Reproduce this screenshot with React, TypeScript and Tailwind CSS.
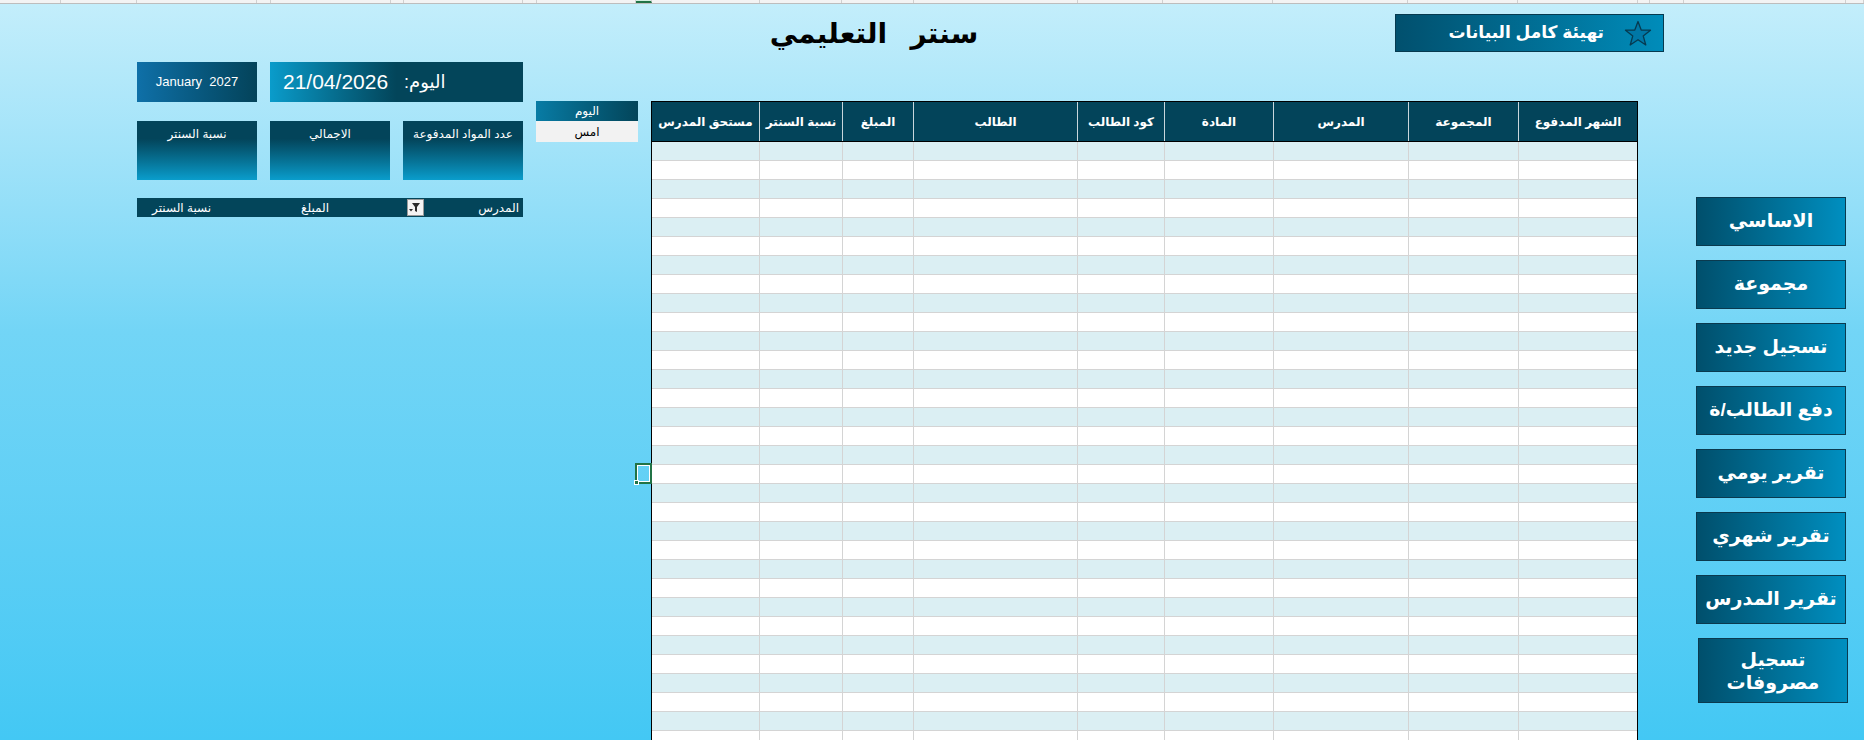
import React from "react";

const headers: { label: string; w: string }[] = [
  { label: "الشهر المدفوع", w: "w-[119px]" },
  { label: "المجموعة", w: "w-[110px]" },
  { label: "المدرس", w: "w-[135px]" },
  { label: "المادة", w: "w-[109px]" },
  { label: "كود الطالب", w: "w-[87px]" },
  { label: "الطالب", w: "w-[164px]" },
  { label: "المبلغ", w: "w-[71px]" },
  { label: "نسبة السنتر", w: "w-[83px]" },
  { label: "مستحق المدرس", w: "w-[107px]" },
];

const menu = [
  "الاساسي",
  "مجموعة",
  "تسجيل جديد",
  "دفع الطالب/ة",
  "تقرير يومي",
  "تقرير شهري",
  "تقرير المدرس",
];

// column edges of the excel header strip
const strip = [61, 76, 120, 14, 120, 13, 119, 14, 99, 16, 108, 82, 72, 164, 85, 110, 135, 110, 120, 12, 34, 162, 18];

const Star = () => (
  <svg width="28" height="27" viewBox="0 0 28 27">
    <polygon
      points="14,1.5 17.2,10 26.5,10.2 19.2,15.9 21.8,25 14,19.7 6.2,25 8.8,15.9 1.5,10.2 10.8,10"
      fill="#0077a6"
      stroke="#063a50"
      strokeWidth="1.3"
      strokeLinejoin="round"
    />
  </svg>
);

const FilterBtn = () => (
  <div className="w-[17px] h-[17px] bg-[#f4f4f4] border border-[#9a9a9a] flex items-center justify-center">
    <svg width="13" height="11" viewBox="0 0 13 11">
      <path d="M3 1h8L8 5v5L6 9V5z" fill="#2b2b2b" />
      <path d="M0 7h4L2 9.5z" fill="#2b2b2b" />
    </svg>
  </div>
);

export default function App() {
  const rows = Array.from({ length: 32 }, (_, i) => i);

  return (
    <div className="relative w-[1864px] h-[740px] overflow-hidden bg-linear-to-b from-[#c4eefb] via-[#72d5f6] via-45% to-[#43c8f4] font-['Liberation_Sans','DejaVu_Sans',sans-serif]">
      {/* excel column header strip */}
      <div className="flex h-[4px] bg-[#f3f3f3] border-b border-[#bdbdbd]">
        {strip.map((w, i) => (
          <div
            key={i}
            style={{ width: w }}
            className={`shrink-0 border-r border-[#d0d0d0] ${i === 9 ? "bg-[#d3f0e0] border-b-2 border-b-[#217346]" : ""}`}
          />
        ))}
      </div>

      {/* title row */}
      <div className="flex items-start h-[58px]">
        <div className="ml-[734px] mt-[10px] w-[280px] text-center text-[28px] leading-[40px] font-bold text-black" dir="rtl">
          سنتر&nbsp;&nbsp;&nbsp;التعليمي
        </div>
        <button className="ml-[381px] mt-[10px] w-[269px] h-[38px] border border-[#063a4f] bg-linear-to-r from-[#01506e] to-[#008cba] flex items-center justify-end gap-[20px] pr-[11px]">
          <span className="text-white font-bold text-[17px]" dir="rtl">تهيئة كامل البيانات</span>
          <Star />
        </button>
      </div>

      {/* main row */}
      <div className="flex items-start">
        {/* left dashboard */}
        <div className="ml-[137px] w-[386px] flex flex-col">
          <div className="flex gap-[13px] h-[40px]">
            <div className="w-[120px] bg-linear-to-r from-[#0f70a8] to-[#04435a] flex items-center justify-center text-white text-[13px] whitespace-pre">
              January  2027
            </div>
            <div className="w-[253px] bg-linear-to-r from-[#0a9ccb] to-[#03455a] to-50% flex items-center pl-[13px] gap-[16px] text-white">
              <span className="text-[21px]">21/04/2026</span>
              <span className="text-[18px]" dir="rtl">اليوم:</span>
            </div>
          </div>
          <div className="flex gap-[13px] h-[59px] mt-[19px]" dir="rtl">
            {["عدد المواد المدفوعة", "الاجمالي", "نسبة السنتر"].map((t) => (
              <div
                key={t}
                className="w-[120px] bg-linear-to-b from-[#03445a] from-30% to-[#0a9dcc] text-white text-[12px] text-center pt-[4px]"
              >
                {t}
              </div>
            ))}
          </div>
          <div className="mt-[18px] h-[19px] bg-[#03455a] flex items-center text-white text-[12px]" dir="rtl">
            <span className="mr-[4px] w-[57px]">المدرس</span>
            <div className="mr-[38px]">
              <FilterBtn />
            </div>
            <span className="mr-[78px]">المبلغ</span>
            <span className="mr-[90px]">نسبة السنتر</span>
          </div>
        </div>

        {/* day switch */}
        <div className="ml-[13px] mt-[39px] w-[102px] flex flex-col text-[12px]">
          <div className="h-[20px] bg-linear-to-r from-[#087ca5] to-[#03455a] text-white flex items-center justify-center">
            اليوم
          </div>
          <div className="h-[21px] bg-[#f2f2f2] text-black flex items-center justify-center">امس</div>
        </div>

        {/* table */}
        <div className="relative ml-[13px] mt-[39px] w-[987px]">
          <div className="border-x border-t border-black" dir="rtl">
            <div className="flex h-[40px] bg-[#03445a] border-b border-black">
              {headers.map((h, i) => (
                <div
                  key={h.label}
                  className={`${h.w} shrink-0 flex items-center justify-center text-white font-bold text-[12px] ${i < headers.length - 1 ? "border-l border-[#c9d6dc]" : ""}`}
                >
                  {h.label}
                </div>
              ))}
            </div>
            {rows.map((r) => (
              <div
                key={r}
                className={`flex h-[19px] border-b border-[#d4d4d4] ${r % 2 === 0 ? "bg-[#dbeff3]" : "bg-white"}`}
              >
                {headers.map((h, i) => (
                  <div
                    key={h.label}
                    className={`${h.w} shrink-0 ${i < headers.length - 1 ? "border-l border-[#d4d4d4]" : ""}`}
                  />
                ))}
              </div>
            ))}
          </div>
          {/* selected cell */}
          <div className="absolute left-[-16px] top-[362px] w-[17px] h-[21px] border-2 border-[#217346]">
            <div className="w-full h-full border border-white" />
            <div className="absolute left-[-3px] bottom-[-3px] w-[5px] h-[5px] bg-[#217346] border border-white" />
          </div>
        </div>

        {/* side menu */}
        <div className="ml-[58px] mt-[135px] flex flex-col gap-[14px]">
          {menu.map((m) => (
            <button
              key={m}
              dir="rtl"
              className="w-[150px] h-[49px] border border-[#0a3a4f] bg-linear-to-r from-[#004f6c] to-[#008fc0] text-white font-bold text-[19px] flex items-center justify-center"
            >
              {m}
            </button>
          ))}
          <button className="ml-[2px] w-[150px] h-[65px] border border-[#0a3a4f] bg-linear-to-r from-[#004f6c] to-[#008fc0] text-white font-bold text-[19px] leading-[23px] flex flex-col items-center justify-center">
            <span>تسجيل</span>
            <span>مصروفات</span>
          </button>
        </div>
      </div>
    </div>
  );
}
